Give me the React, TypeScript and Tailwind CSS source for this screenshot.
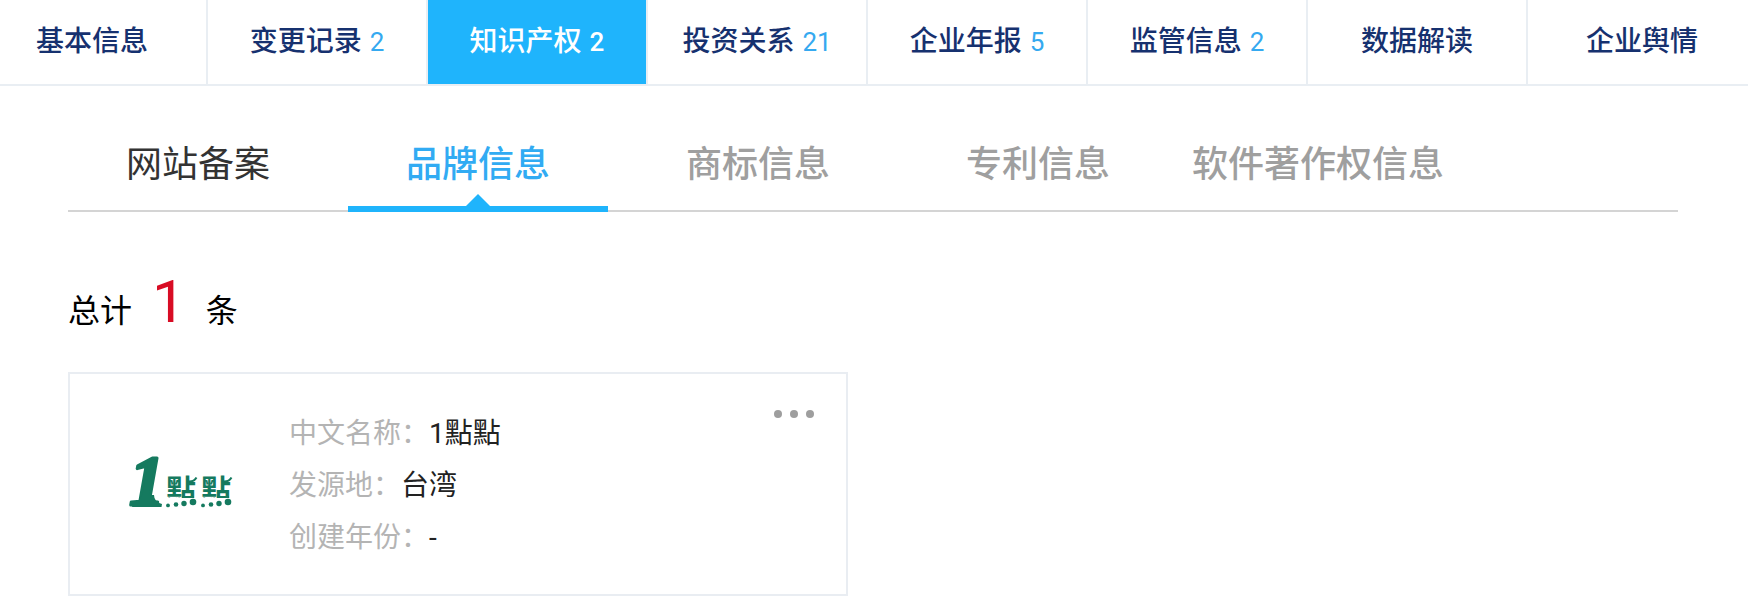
import React from "react";
import clsx from "clsx";

interface MainTab {
  label: string;
  count?: number;
}

interface SubTab {
  label: string;
  visited?: boolean;
}

const mainTabs: MainTab[] = [
  { label: "基本信息" },
  { label: "变更记录", count: 2 },
  { label: "知识产权", count: 2 },
  { label: "投资关系", count: 21 },
  { label: "企业年报", count: 5 },
  { label: "监管信息", count: 2 },
  { label: "数据解读" },
  { label: "企业舆情" },
];

const subTabs: SubTab[] = [
  { label: "网站备案", visited: true },
  { label: "品牌信息" },
  { label: "商标信息" },
  { label: "专利信息" },
  { label: "软件著作权信息" },
];

const brandFields = [
  { name: "中文名称：", value: "1點點" },
  { name: "发源地：", value: "台湾" },
  { name: "创建年份：", value: "-" },
];

const activeMain = "知识产权";
const activeSub = "品牌信息";

// cx, cy, r of the pearls under the first character
const pearls = [
  [40, 55.4, 1.9],
  [48, 54.5, 2.3],
  [56, 53.5, 2.7],
  [65, 52, 3.3],
];

const BrandLogo: React.FC = () => (
  <svg
    className="h-[62px] w-[110px] shrink-0 overflow-visible"
    viewBox="0 3 110 62"
    fill="#157a5f"
    role="img"
    aria-label="1點點"
  >
    <defs>
      <clipPath id="logo-top">
        <rect x="36" y="20" width="74" height="28" />
      </clipPath>
    </defs>
    <text
      x="1"
      y="55"
      fontSize="72"
      fontWeight="700"
      fontStyle="italic"
      fontFamily="Liberation Serif, serif"
      stroke="#157a5f"
      strokeWidth="3"
      strokeLinejoin="round"
    >
      1
    </text>
    {/* flared foot */}
    <path d="M4 57L5 54Q11 52.5 13.5 45H26Q26 52 34 54L33.5 57Z" />
    <g clipPath="url(#logo-top)" fontSize="30" fontWeight="700" fontFamily="Noto Sans CJK TC, sans-serif">
      <text x="38" y="51">點</text>
      <text x="73" y="51">點</text>
    </g>
    {[0, 35].map((dx) => (
      <g key={dx} transform={`translate(${dx} 0)`}>
        <path d="M54 47H66M60 31.5Q66 32 68.5 27.5" fill="none" stroke="#157a5f" strokeWidth="2" />
        {pearls.map(([cx, cy, r]) => (
          <circle key={cx} cx={cx} cy={cy} r={r} />
        ))}
      </g>
    ))}
  </svg>
);

const App: React.FC = () => {
  return (
    <div className="bg-white font-[Roboto,'Noto_Sans_CJK_SC',sans-serif]">
      {/* Main tabs */}
      <nav className="grid grid-cols-[208fr_repeat(7,220fr)] border-b-2 border-[#e9eef3]">
        {mainTabs.map((tab) => (
          <button
            key={tab.label}
            className={clsx(
              "flex h-[84px] items-center justify-center gap-2 border-r-2 border-[#e9eef3] text-[28px] leading-10 font-medium whitespace-nowrap first:pr-[22px] last:border-r-0 last:pl-2",
              tab.label === activeMain ? "bg-[#1fb4fc] bg-clip-padding text-white" : "text-[#16316f]"
            )}
          >
            {tab.label}
            {tab.count && (
              <span
                className={clsx(
                  "text-[26px] leading-10",
                  tab.label === activeMain ? "text-white" : "font-normal text-[#35a9f0]"
                )}
              >
                {tab.count}
              </span>
            )}
          </button>
        ))}
      </nav>

      <main className="pr-[70px] pl-[68px]">
        {/* Sub tabs */}
        <div className="flex h-[126px] gap-5 border-b-2 border-[#d4d4d4]">
          {subTabs.map((tab) => (
            <button
              key={tab.label}
              className={clsx(
                "relative w-[260px] pt-[34px] text-4xl leading-10 whitespace-nowrap",
                tab.label === activeSub
                  ? "font-medium text-[#31abf3]"
                  : tab.visited
                    ? "text-[#333333]"
                    : "font-medium text-[#9f9f9f]"
              )}
            >
              {tab.label}
              {tab.label === activeSub && (
                <span className="absolute inset-x-0 -bottom-[2px] flex flex-col items-center">
                  <span className="border-x-12 border-b-12 border-x-transparent border-b-[#1fb4fc]" />
                  <span className="h-[6px] w-full bg-[#1fb4fc]" />
                </span>
              )}
            </button>
          ))}
        </div>

        {/* Total */}
        <p className="mt-[60px] flex items-baseline gap-5 text-[32px] leading-none text-black">
          总计
          <span className="text-6xl leading-[60px] text-[#d80c24]">1</span>
          条
        </p>

        {/* Brand card */}
        <section className="relative mt-10 flex h-56 w-[780px] max-w-full items-center gap-[51px] border-2 border-[#e9edf2] pl-[58px]">
          <BrandLogo />
          <dl className="pt-1 text-[28px] leading-[52px]">
            {brandFields.map((field) => (
              <div key={field.name} className="flex">
                <dt className="text-[#b4b4b4]">{field.name}</dt>
                <dd className="text-[#222222]">{field.value}</dd>
              </div>
            ))}
          </dl>
          <button aria-label="更多" className="absolute top-9 right-8 flex gap-2">
            <span className="size-2 rounded-full bg-[#9e9e9e]" />
            <span className="size-2 rounded-full bg-[#9e9e9e]" />
            <span className="size-2 rounded-full bg-[#9e9e9e]" />
          </button>
        </section>
      </main>
    </div>
  );
};

export default App;
